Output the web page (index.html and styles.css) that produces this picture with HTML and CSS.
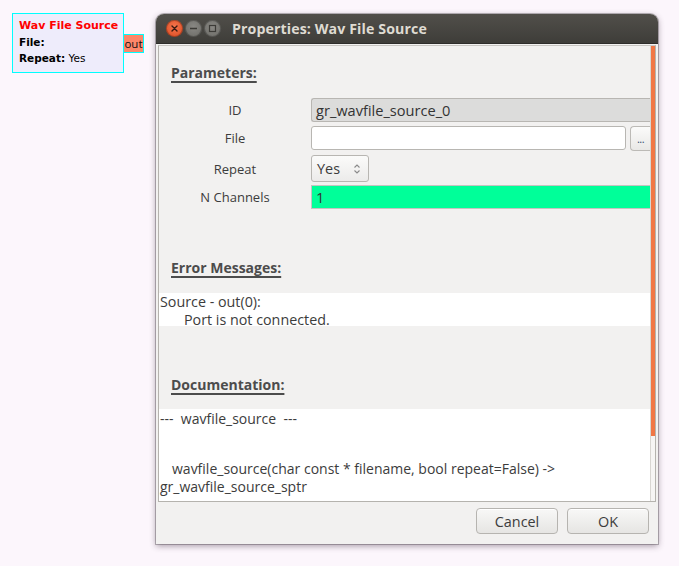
FILE: index.html
```html
<!DOCTYPE html>
<html>
<head>
<meta charset="utf-8">
<link rel="stylesheet" href="styles.css">
</head>
<body>
<div class="canvas">
  <div class="block">
    <div class="block-title">Wav File Source</div>
    <div class="block-param"><b>File:</b></div>
    <div class="block-param"><b>Repeat:</b> Yes</div>
    <div class="port">out</div>
  </div>

  <div class="window">
    <div class="titlebar">
      <div class="wbtns">
        <span class="wbtn close"><svg width="17" height="17" viewBox="0 0 17 17"><path d="M6 6 L11 11 M11 6 L6 11" stroke="#3a1a10" stroke-width="1.4" stroke-linecap="round"/></svg></span>
        <span class="wbtn"><svg width="17" height="17" viewBox="0 0 17 17"><path d="M5 8.5 H12" stroke="#3c3b37" stroke-width="1.5"/></svg></span>
        <span class="wbtn"><svg width="17" height="17" viewBox="0 0 17 17"><rect x="5.5" y="5.5" width="6" height="6" fill="none" stroke="#3c3b37" stroke-width="1.2"/></svg></span>
      </div>
      <div class="wtitle">Properties: Wav File Source</div>
    </div>
    <div class="main">
      <div class="scroll">
        <div class="heading first">Parameters:</div>
        <div class="params">
          <div class="prow">
            <div class="plabel">ID</div>
            <div class="pfield entry readonly">gr_wavfile_source_0</div>
          </div>
          <div class="prow">
            <div class="plabel">File</div>
            <div class="pfield filebox">
              <div class="entry white"></div>
              <div class="dots">...</div>
            </div>
          </div>
          <div class="prow combo-row">
            <div class="plabel">Repeat</div>
            <div class="combo">Yes<svg class="spin" width="8" height="12" viewBox="0 0 8 12"><path d="M1.5 4.5 L4 2 L6.5 4.5 M1.5 7.5 L4 10 L6.5 7.5" fill="none" stroke="#8a8a8a" stroke-width="1.1"/></svg></div>
          </div>
          <div class="prow">
            <div class="plabel">N Channels</div>
            <div class="pfield entry green">1</div>
          </div>
        </div>
        <div class="heading err">Error Messages:</div>
        <div class="textbox errbox">
          <div>Source - out(0):</div>
          <div class="indent">Port is not connected.</div>
        </div>
        <div class="heading doc">Documentation:</div>
        <div class="textbox docbox">
          <div>---&nbsp; wavfile_source &nbsp;---</div>
          <div class="sig">wavfile_source(char const * filename, bool repeat=False) -&gt;</div>
          <div>gr_wavfile_source_sptr</div>
        </div>
      </div>
      <div class="vscroll"><div class="thumb"></div></div>
    </div>
    <div class="actions">
      <button class="btn">Cancel</button>
      <button class="btn">OK</button>
    </div>
  </div>
</div>
</body>
</html>
```
FILE: styles.css
```css
html, body {
  margin: 0;
  padding: 0;
}
body {
  background: #fcf6fc;
  width: 679px;
  height: 566px;
  overflow: hidden;
  font-family: "Open Sans", "DejaVu Sans", sans-serif;
}
.canvas {
  position: relative;
  width: 679px;
  height: 566px;
}

/* flow-graph block */
.block {
  position: absolute;
  left: 12px;
  top: 13px;
  width: 112px;
  height: 60px;
  border: 1px solid #00ffff;
  background: #eeecfb;
  font-family: "DejaVu Sans", sans-serif;
  font-size: 10.5px;
  color: #000;
  padding: 4px 0 0 6px;
  box-sizing: border-box;
}
.block-title {
  color: #ff0000;
  font-weight: bold;
  font-size: 11px;
  line-height: 16px;
}
.block-param {
  line-height: 16px;
}
.port {
  position: absolute;
  left: 110px;
  top: 20px;
  width: 19px;
  height: 17px;
  border: 1px solid #00ffff;
  background: #fd876a;
  font-family: "Open Sans", sans-serif;
  font-size: 11.5px;
  line-height: 17px;
  text-align: center;
  box-sizing: content-box;
  color: #111;
}

/* dialog window */
.window {
  position: absolute;
  left: 156px;
  top: 14px;
  width: 502px;
  height: 530px;
  border-radius: 8px 8px 0 0;
  background: #f2f1f0;
  box-shadow: 0 2px 6px rgba(60, 40, 60, 0.45), 0 0 0 1px rgba(0,0,0,0.25);
  display: flex;
  flex-direction: column;
  overflow: hidden;
}
.titlebar {
  height: 29px;
  flex: none;
  background: linear-gradient(#514f4a, #3e3d39);
  display: flex;
  align-items: center;
  border-bottom: 1px solid #2e2d2a;
}
.wbtns {
  display: flex;
  gap: 2px;
  padding-left: 10px;
}
.wbtn {
  width: 17px;
  height: 17px;
  border-radius: 50%;
  background: radial-gradient(circle at 50% 40%, #898884, #6a6964);
  display: flex;
  box-shadow: inset 0 0 0 1px rgba(0,0,0,0.25);
}
.wbtn.close {
  background: radial-gradient(circle at 50% 40%, #f6764e, #d9471d);
}
.wtitle {
  margin-left: 11px;
  color: #dfdbd2;
  font-weight: bold;
  font-size: 14.2px;
  letter-spacing: 0.1px;
}
.main {
  display: flex;
  height: 455px;
  flex: none;
  margin: 1px 2px 0 2px;
  border: 1px solid #b5b3ae;
  border-top: 1px solid #c8c6c2;
}
.scroll {
  flex: 1;
  background: #f2f1f0;
  font-size: 13px;
  color: #3c3c3c;
  display: flex;
  flex-direction: column;
}
.vscroll {
  width: 4px;
  flex: none;
  background: #f6f5f4;
  border-left: 1px solid #d8d6d2;
}
.thumb {
  height: 390px;
  background: #f07746;
}
.heading {
  margin-left: 12px;
  font-weight: bold;
  font-size: 14px;
  color: #4c4c4c;
  text-decoration: underline;
  text-decoration-thickness: 2px;
  text-underline-offset: 3px;
  align-self: flex-start;
  line-height: 19px;
}
.heading.first { margin-top: 17px; }
.heading.err { margin-top: 45px; }
.heading.doc { margin-top: 49px; }

.params {
  margin-top: 16px;
  display: flex;
  flex-direction: column;
}
.prow {
  display: flex;
  align-items: center;
  height: 24px;
  margin-bottom: 4px;
}
.prow.combo-row {
  height: 27px;
  margin-top: 1px;
  margin-bottom: 3px;
}
.plabel {
  width: 152px;
  text-align: center;
  color: #3c3c3c;
}
.pfield {
  flex: 1;
  height: 24px;
  box-sizing: border-box;
}
.entry {
  border: 1px solid #b8b6b2;
  border-radius: 3px;
  padding: 0 4px;
  line-height: 22px;
  font-size: 14.6px;
  color: #333;
  box-sizing: border-box;
  height: 24px;
}
.readonly {
  background: #dcdcdb;
  border-right: none;
  border-radius: 3px 0 0 3px;
}
.green {
  background: #00ff99;
  border-right: none;
  border-radius: 0;
  border-color: #c4c4c0;
}
.filebox {
  display: flex;
  gap: 4px;
}
.entry.white {
  flex: 1;
  background: #ffffff;
}
.dots {
  width: 20px;
  height: 25px;
  border: 1px solid #bcbab6;
  border-right: none;
  border-radius: 4px 0 0 4px;
  background: linear-gradient(#fbfbfa, #e9e8e6);
  box-sizing: border-box;
  font-size: 11px;
  text-align: center;
  line-height: 23px;
  color: #35506e;
  letter-spacing: -0.5px;
}
.combo {
  width: 58px;
  height: 27px;
  box-sizing: border-box;
  border: 1px solid #b8b6b2;
  border-radius: 3px;
  background: linear-gradient(#fbfbfa, #ecebea);
  display: flex;
  align-items: center;
  justify-content: space-between;
  padding: 0 7px 0 5px;
  font-size: 14.4px;
  color: #3c3c3c;
}
.textbox {
  background: #ffffff;
  color: #3c3c3c;
  line-height: 18px;
  font-size: 14.3px;
  padding-left: 1px;
}
.errbox {
  margin-top: 16px;
  height: 33px;
}
.indent {
  padding-left: 24px;
}
.docbox {
  margin-top: 15px;
  padding-top: 1px;
  flex: 1;
  font-size: 14px;
}
.sig {
  margin-top: 32px;
  padding-left: 12px;
}
.actions {
  flex: 1;
  display: flex;
  justify-content: flex-end;
  align-items: flex-start;
  gap: 9px;
  padding: 6px 9px 0 0;
}
.btn {
  width: 82px;
  height: 26px;
  border: 1px solid #b6b4b0;
  border-radius: 4px;
  background: linear-gradient(#f8f8f7, #e6e5e3);
  font-family: "Open Sans", "DejaVu Sans", sans-serif;
  font-size: 14.4px;
  color: #3c3c3c;
  padding: 0;
  box-shadow: inset 0 1px 0 #ffffff;
}
```
